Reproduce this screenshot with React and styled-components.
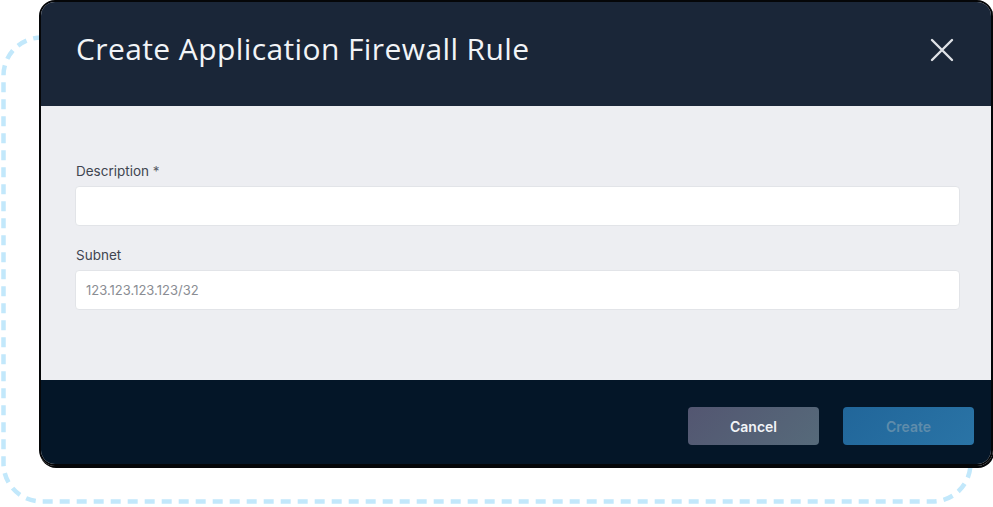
import styled, { createGlobalStyle } from 'styled-components';

const GlobalStyle = createGlobalStyle`
  html, body {
    margin: 0;
    padding: 0;
    background: #ffffff;
  }
  * {
    box-sizing: border-box;
  }
`;

const Stage = styled.div`
  position: relative;
  width: 993px;
  height: 507px;
  overflow: hidden;
  background: #ffffff;
`;

const DashedFrame = styled.svg`
  position: absolute;
  left: 0;
  top: 0;
  width: 993px;
  height: 507px;
`;

const Layer = styled.div`
  position: relative;
  padding-left: 39px;
`;

const Modal = styled.div`
  width: 954px;
  height: 466px;
  border: 2px solid #050608;
  border-radius: 16px;
  box-shadow: 1px 2px 0 #050608;
  overflow: hidden;
  display: flex;
  flex-direction: column;
  font-family: Inter, "Liberation Sans", sans-serif;
`;

const Header = styled.header`
  height: 104px;
  flex-shrink: 0;
  background: #1a2638;
  display: flex;
  align-items: center;
  justify-content: space-between;
  padding: 0 36px 12px 35px;
`;

const Title = styled.h1`
  margin: 0;
  font-family: "Open Sans", Inter, sans-serif;
  font-size: 30px;
  font-weight: 400;
  color: #f2f4f7;
  letter-spacing: 0.4px;
`;

const CloseButton = styled.button`
  width: 26px;
  height: 26px;
  padding: 0;
  margin-top: 4px;
  border: none;
  background: none;
  color: #dfe2e7;
  display: flex;
  align-items: center;
  justify-content: center;
  cursor: pointer;
`;

const Body = styled.div`
  flex: 1;
  background: #edeef2;
  padding: 57px 31px 0 34px;
  display: flex;
  flex-direction: column;
  gap: 21px;
`;

const Field = styled.div`
  display: flex;
  flex-direction: column;
  gap: 7px;
`;

const Label = styled.label`
  font-size: 13.5px;
  color: #3f4550;
  line-height: 16px;
  padding-left: 1px;
`;

const Input = styled.input`
  height: 40px;
  width: 100%;
  background: #ffffff;
  border: 1px solid #e2e4e8;
  border-radius: 4px;
  padding: 0 10px;
  font-family: Inter, "Liberation Sans", sans-serif;
  font-size: 13px;
  color: #333;
  outline: none;

  &::placeholder {
    color: #8a8d93;
  }
`;

const Footer = styled.footer`
  height: 84px;
  flex-shrink: 0;
  background: #041628;
  display: flex;
  align-items: center;
  justify-content: flex-end;
  gap: 24px;
  padding: 8px 17px 0 0;
`;

const Button = styled.button`
  width: 131px;
  height: 38px;
  border: none;
  border-radius: 4px;
  font-family: Inter, "Liberation Sans", sans-serif;
  font-size: 14px;
  font-weight: 600;
  background: ${p => (p.$primary ? 'linear-gradient(135deg, #21669a, #2a74a6)' : 'linear-gradient(135deg, #535671, #566a7a)')};
  color: ${p => (p.$primary ? '#5f8cab' : '#f2f4f7')};
  cursor: pointer;
`;

const Required = styled.span`
  color: #5a5f68;
`;

export default function App() {
  return (
    <>
      <GlobalStyle />
      <Stage>
        <DashedFrame viewBox="0 0 993 507">
          <rect
            x="3.5"
            y="37.5"
            width="967"
            height="464"
            rx="38"
            fill="none"
            stroke="#c2e8fb"
            strokeWidth="4.5"
            strokeDasharray="10 7"
          />
        </DashedFrame>
        <Layer>
          <Modal>
            <Header>
              <Title>Create Application Firewall Rule</Title>
              <CloseButton aria-label="Close">
                <svg width="24" height="24" viewBox="0 0 24 24" fill="none" stroke="currentColor" strokeWidth="2.4" strokeLinecap="round">
                  <path d="M2 2 L22 22 M22 2 L2 22" />
                </svg>
              </CloseButton>
            </Header>
            <Body>
              <Field>
                <Label>Description <Required>*</Required></Label>
                <Input type="text" />
              </Field>
              <Field>
                <Label>Subnet</Label>
                <Input type="text" placeholder="123.123.123.123/32" />
              </Field>
            </Body>
            <Footer>
              <Button>Cancel</Button>
              <Button $primary disabled>Create</Button>
            </Footer>
          </Modal>
        </Layer>
      </Stage>
    </>
  );
}
